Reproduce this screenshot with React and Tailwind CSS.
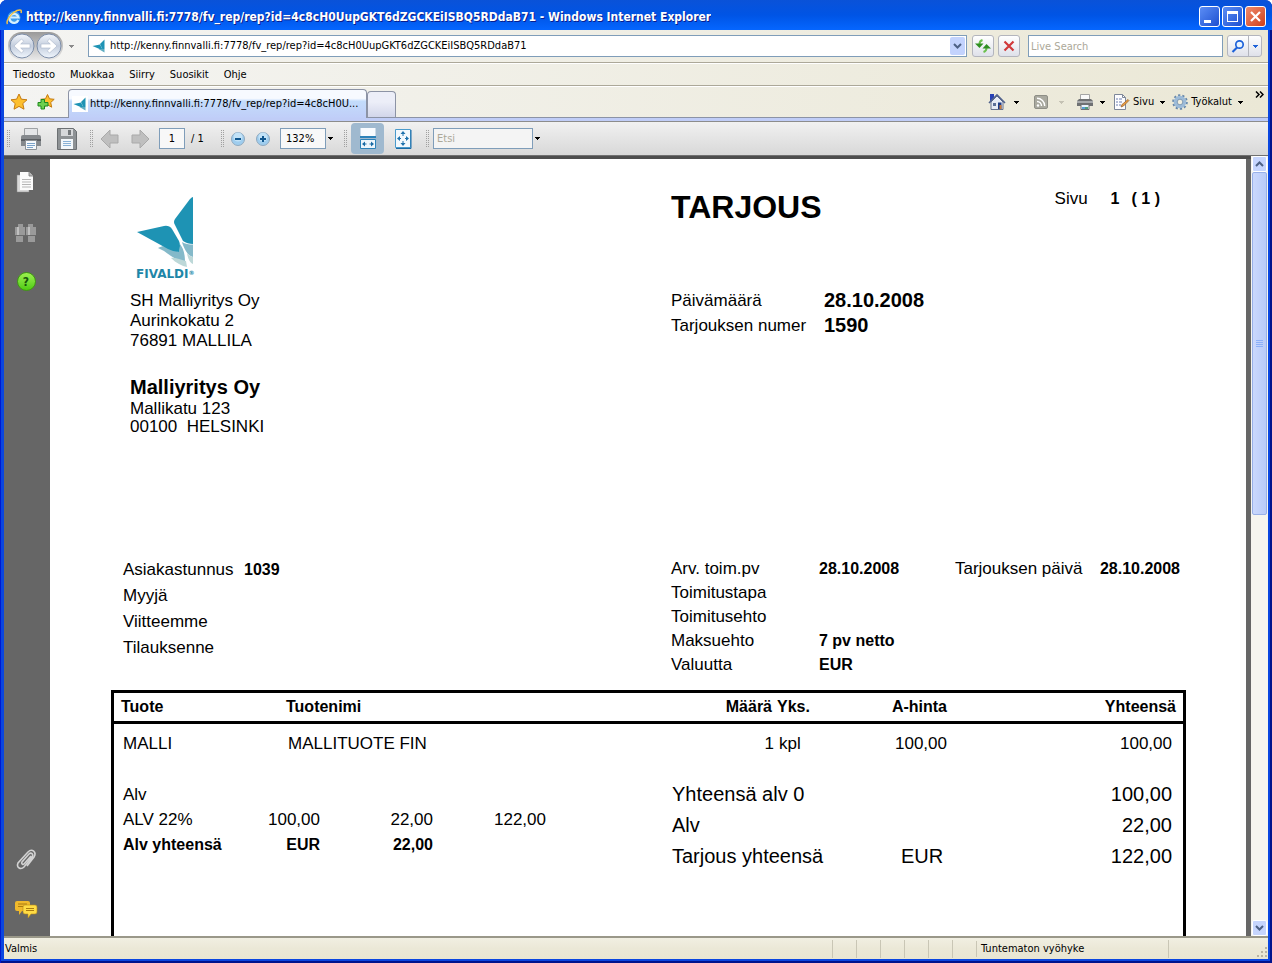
import { useState } from 'react'

const DownArrow = ({ className = 'fill-black', label = 'Avaa valikko' }) => (
  <button type="button" aria-label={label} className="flex h-5 w-[9px] items-center justify-center">
    <svg viewBox="0 0 5 3" className={`h-[3px] w-[5px] ${className}`} shapeRendering="crispEdges">
      <path d="M0 0h5v1H4v1H3v1H2V2H1V1H0z" />
    </svg>
  </button>
)

const Chevron = ({ up = false }) => (
  <svg viewBox="0 0 9 6" className={`h-[6px] w-[9px] ${up ? 'rotate-180' : ''}`}>
    <path d="M1 1l3.5 3.5L8 1" fill="none" stroke="#4d6185" strokeWidth="2" />
  </svg>
)

const Grip = () => (
  <svg viewBox="0 0 4 18" className="h-[18px] w-1 shrink-0" shapeRendering="crispEdges">
    {[0, 2, 4, 6, 8, 10, 12, 14, 16].map((y) => (
      <path key={y} d={`M0 ${y}h1v1h-1zM2 ${y}h1v1h-1z`} fill="#a0a0a0" />
    ))}
  </svg>
)

const IeLogo = () => (
  <svg viewBox="0 0 16 16" className="h-4 w-4 shrink-0">
    <circle cx="8" cy="8.500" r="6.500" fill="#3f9be8" />
    <path d="M12.300 11A4.500 4.500 0 1 1 12.500 8.500H5" fill="none" stroke="#d5efff" strokeWidth="2.200" />
    <path d="M1.500 15C-.5 12 5 4 11 1.500c3.500-1.300 5-.3 4 2.500" fill="none" stroke="#f6c445" strokeWidth="1.500" />
  </svg>
)

const BirdIcon = () => (
  <svg viewBox="0 0 16 16" className="h-4 w-4 shrink-0">
    <path d="M0 0h16v16H0z" fill="#fff" />
    <path d="M1.500 8l7.500-1.500 3 6z" fill="#1e93b4" />
    <path d="M13.500 1.500v9.500l-2 .5L9 6z" fill="#1e93b4" />
    <path d="M13.500 11v3.500l-6-3.500z" fill="#5fadc2" />
  </svg>
)

const NavButtons = () => (
  <div className="flex h-[28px] w-[55px] items-center justify-between rounded-full bg-linear-to-b from-[#9a9a9a] to-[#e9e9e9] px-px">
    {['Takaisin', 'Eteenpäin'].map((label, i) => (
      <button key={label} type="button" aria-label={label}>
        <svg viewBox="0 0 26 26" className="h-[26px] w-[26px]">
          <defs>
            <linearGradient id={`nav${i}`} x1="0" y1="0" x2="0" y2="1">
              <stop offset="0" stopColor="#f4f7fc" />
              <stop offset=".5" stopColor="#c3cddd" />
              <stop offset="1" stopColor="#f0f6fd" />
            </linearGradient>
          </defs>
          <circle cx="13" cy="13" r="12" fill={`url(#nav${i})`} stroke="#7d8ea8" />
          <path
            d="M5 13l7.500-7 2.200 2.200L11.700 11H21v4h-9.300l3 2.800L12.500 20z"
            transform={i ? 'rotate(180 13 13)' : undefined}
            fill="#fff"
            stroke="#aab6c9"
            strokeWidth=".6"
          />
        </svg>
      </button>
    ))}
  </div>
)

const StarIcon = ({ plus = false }) => (
  <svg viewBox="0 0 18 18" className="h-[18px] w-[18px]">
    <path
      d={plus ? 'M10.500 1.500l2 4.300 4.700.5-3.500 3.200 1 4.700-4.200-2.400-4.200 2.400 1-4.700L3.800 6.300l4.700-.5z' : 'M9 1l2.400 5.200 5.600.6-4.200 3.800 1.200 5.600L9 13.400l-5 2.800 1.200-5.600L1 6.800l5.600-.6z'}
      fill="#fdbf2d"
      stroke="#c57a10"
    />
    {plus && <path d="M4 6.500h3.500v3H11V13H7.500v3H4v-3H1V9.500h3z" fill="#6ed04f" stroke="#1f8a1f" />}
  </svg>
)

const HomeIcon = () => (
  <svg viewBox="0 0 18 18" className="h-[18px] w-[18px]">
    <path d="M3 9l6-6 6 6v7.500H3z" fill="#e8ecf5" stroke="#66718c" />
    <path d="M2 1h4v4L2 8.500z" fill="#2740b5" />
    <path d="M1 10l8-8 8 8" fill="none" stroke="#52638d" strokeWidth="1.600" />
    <path d="M10 9.500h3.500V16H10z" fill="#1f3d88" />
    <path d="M5 10h3v3H5z" fill="#5d6f97" />
    <path d="M11.500 12h2v4h-2z" fill="#ca7b39" />
  </svg>
)

const RssIcon = () => (
  <svg viewBox="0 0 14 14" className="h-[14px] w-[14px]">
    <rect x=".5" y=".5" width="13" height="13" rx="1.500" fill="#a9a99f" stroke="#8e8e86" />
    <circle cx="4" cy="10.500" r="1.200" fill="#fff" />
    <path d="M3 6.500a4.500 4.500 0 0 1 4.500 4.500M3 3.300A7.700 7.700 0 0 1 10.700 11" fill="none" stroke="#fff" strokeWidth="1.400" />
  </svg>
)

const SmallPrinter = () => (
  <svg viewBox="0 0 18 16" className="h-4 w-[18px]">
    <path d="M4.500.500h9v6h-9z" fill="#fafafa" stroke="#a5a5a5" />
    <path d="M3 5h12l2 2v5H1V7z" fill="#6f7173" />
    <path d="M1 7h16v2H1z" fill="#a9abad" />
    <path d="M5 10.500h8v5H5z" fill="#eaf3fb" stroke="#6f7173" />
    <path d="M6 13h3v2H6z" fill="#59a0d8" />
    <path d="M9 13h3v2H9z" fill="#4f9f7c" />
  </svg>
)

const PageIcon = () => (
  <svg viewBox="0 0 17 16" className="h-4 w-[17px]">
    <path d="M1.500.5h8l3 3v12h-11z" fill="#fdfdff" stroke="#7d8799" />
    <path d="M9.500.5v3h3" fill="none" stroke="#7d8799" />
    <path d="M3 5h2M6 5h3M3 8h2M6 8h3M3 11h2M6 11h2" stroke="#6c7fb0" />
    <path d="M8 13l1-2.500 6-5 1 1-5.500 5.500z" fill="#f0a040" stroke="#8e5a2a" strokeWidth=".7" />
  </svg>
)

const GearIcon = () => (
  <svg viewBox="0 0 16 16" className="h-4 w-4">
    <circle cx="8" cy="8" r="6.800" fill="none" stroke="#6788ab" strokeWidth="2" strokeDasharray="2.200 2.072" />
    <circle cx="8" cy="8" r="4.500" fill="#f1eedf" stroke="#9dbbd8" strokeWidth="3.500" />
    <circle cx="8" cy="8" r="2.800" fill="#f1eedf" stroke="#6788ab" strokeWidth=".8" />
  </svg>
)

const BigPrinter = () => (
  <svg viewBox="0 0 24 24" className="h-6 w-6">
    <path d="M5.500 1.500h13v9h-13z" fill="#e4e6e8" stroke="#9fa2a5" />
    <path d="M2 10q0-2 2-2h16q2 0 2 2v9H2z" fill="#85898d" />
    <path d="M2 12h20v2H2z" fill="#5b5f63" />
    <path d="M6.500 13.500h11v9h-11z" fill="#f6f9fc" stroke="#8d9296" />
    <path d="M8 16.500h8M8 18.500h8M8 20.500h6" stroke="#7ba3c9" />
  </svg>
)

const SaveIcon = () => (
  <svg viewBox="0 0 24 24" className="h-6 w-6">
    <path d="M2.500 1.500h16l3 3v18h-19z" fill="#8e9295" stroke="#6c7073" />
    <path d="M6 2h12v7H6z" fill="#d6d8da" />
    <path d="M13 3h3v5h-3z" fill="#74787b" />
    <path d="M6 12h12v10H6z" fill="#f4f8fb" />
    <path d="M8 14.500h8M8 16.500h8M8 18.500h8" stroke="#8ab2d6" />
  </svg>
)

const PageArrow = ({ back = false }) => (
  <svg viewBox="0 0 19 20" className={`h-5 w-[19px] ${back ? '' : 'rotate-180'}`}>
    <path d="M1 10l9-9v5h8v8h-8v5z" fill="#bfbfbf" stroke="#a9a9a9" />
  </svg>
)

const ZoomBall = ({ plus = false }) => (
  <svg viewBox="0 0 16 16" className="h-4 w-4">
    <circle cx="8" cy="8" r="6.500" fill="#9fcdee" stroke="#8fa9bf" />
    <circle cx="8" cy="6" r="4.500" fill="#c2e2f7" />
    <path d={plus ? 'M7 5h2v2h2v2H9v2H7V9H5V7h2z' : 'M5 7h6v2H5z'} fill="#11578f" />
  </svg>
)

const FitWidthIcon = () => (
  <svg viewBox="0 0 16 21" className="h-[21px] w-4">
    <path d="M.5 0h15v9.500H.5z" fill="#f8fbfe" />
    <path d="M0 8h16v2H0z" fill="#2d82b9" />
    <path d="M.5 11.500h15v9H.5z" fill="#eef6fc" stroke="#2d82b9" />
    <path d="M2 16l3-2.500v2h1.500v1H5v2zM14 16l-3-2.500v2H9.500v1H11v2z" fill="#1a6ba5" />
  </svg>
)

const FitPageIcon = () => (
  <svg viewBox="0 0 17 20" className="h-5 w-[17px]">
    <path d="M.5.500h15v18H.5z" fill="#f3f9fd" stroke="#4a9acb" />
    <path d="M16 1v18.500H1" fill="none" stroke="#1a6ba5" />
    <path d="M8 2l2.500 3h-5zM8 17l2.500-3h-5zM2 9.500L5 7v5zM14 9.500L11 7v5z" fill="#1f73ad" />
    <path d="M8 5v2M8 12v2M4 9.500h2M10 9.500h2" stroke="#1f73ad" />
  </svg>
)

const FivaldiLogo = () => (
  <div className="h-[84px]">
    <svg viewBox="0 0 64 72" className="h-[72px] w-16" role="img" aria-label="Fivaldi">
      <path d="M46 46c3 2 7 2.500 11 2.500V61c-5-1-9-8-11-15z" fill="#84b9c9" />
      <path d="M22 52c4-2 6-2 9-1l12 5 1-8c3 4 5 9 5 18-8-1-17-8-21-11-2-1-4-2-6-3z" fill="#84b9c9" />
      <path d="M51 57c2 2 4 4 6 4v7c-3-1-5-5-6-11z" fill="#bdd8d8" />
      <path d="M35 62c5-1 9 2 15 3l1 6c-5-1-11-4-16-9z" fill="#bdd8d8" />
      <path d="M57 1v47c-4 0-7-1-10-3l-8-16q-2-3 0-6L54 3q2-2 3-2z" fill="#1e93b4" />
      <path d="M1 36l27-6q5-1 8 3l7 12q1 2 1 5l-1 6q-5 0-11-3z" fill="#1e93b4" />
    </svg>
    <p className="font-['DejaVu_Sans',sans-serif] text-[12px] leading-3 font-bold text-[#1e86a8]">
      FIVALDI<sup className="text-[6px]">®</sup>
    </p>
  </div>
)

const PagesIcon = () => (
  <svg viewBox="0 0 20 24" className="h-6 w-5">
    <path d="M1 4h12v17H1z" fill="#d8d8d8" stroke="#888" strokeWidth=".5" />
    <path d="M4 1h9l4 4v14H4z" fill="#fbfbfb" />
    <path d="M13 1v4h4" fill="#bbb" stroke="#777" strokeWidth=".8" />
    <path d="M6 8.500h9M6 11h9M6 13.500h9M6 16h9" stroke="#b5b5b5" />
  </svg>
)

const BinocularsIcon = () => (
  <svg viewBox="0 0 22 20" className="h-5 w-[22px]">
    <path d="M3 1h5v3h2v9H8v6H1v-6H0V4h3zM13 1h5v3h3v9h-1v6h-7v-6h-2V4h2z" fill="#9a9a9a" />
    <path d="M0 12.500h10M11 12.500h10" stroke="#6b6b6b" />
    <path d="M3 4v8M14 4v8" stroke="#c0c0c0" strokeWidth="2" />
  </svg>
)

const ClipIcon = () => (
  <svg viewBox="0 0 22 24" className="h-6 w-[22px]">
    <path
      d="M16 8l-7 8c-1 1-3 0-2-2l7-8c2-2 5 0 3 3l-8 10c-3 3-8 1-6-4L13 4c4-4 9 0 6 5l-7 9"
      fill="none"
      stroke="#d2d2d2"
      strokeWidth="1.600"
    />
  </svg>
)

const CommentsIcon = () => (
  <svg viewBox="0 0 24 19" className="h-[19px] w-6">
    <path d="M3 1h11q2 0 2 2v6q0 2-2 2H8l-3 4v-4H3q-2 0-2-2V3q0-2 2-2z" fill="#f0b92c" />
    <path d="M4 4h9M4 6.500h9" stroke="#a97a10" />
    <path d="M11 5h10q2 0 2 2v5q0 2-2 2h-4l-3 4v-4h-3q-2 0-2-2V7q0-2 2-2z" fill="#ffdc45" stroke="#b98c1a" strokeWidth=".6" />
    <path d="M12 8.500h8M12 10.500h8" stroke="#a97a10" />
  </svg>
)

const captionButtons = [
  { label: 'Pienennä', bg: 'bg-linear-to-br from-[#5b8df5] to-[#1f4fd0]', icon: <path d="M4 13h7v3H4z" fill="#fff" /> },
  { label: 'Suurenna', bg: 'bg-linear-to-br from-[#5b8df5] to-[#1f4fd0]', icon: <path d="M4 4h11v11H4zm1 3v7h9V7z" fill="#fff" fillRule="evenodd" /> },
  { label: 'Sulje', bg: 'bg-linear-to-br from-[#ef8a6b] to-[#cf3d14]', icon: <path d="M5 5l9 9M14 5l-9 9" stroke="#fff" strokeWidth="2.200" /> },
]

const TitleBar = () => (
  <header className="-mx-1 flex h-[30px] shrink-0 items-center bg-linear-to-b from-[#0a52d8] via-[#0054e5] to-[#0566ff] px-1 pt-[3px]">
    <div className="flex min-w-0 flex-1 items-center gap-[4px] pl-[2px]">
      <IeLogo />
      <h1 className="truncate text-[12px] font-bold text-white [text-shadow:1px_1px_#0a1d8c]">
        http://kenny.finnvalli.fi:7778/fv_rep/rep?id=4c8cH0UupGKT6dZGCKEiISBQ5RDdaB71 - Windows Internet Explorer
      </h1>
    </div>
    <div className="flex gap-[2px] pr-[2px]">
      {captionButtons.map((b) => (
        <button key={b.label} type="button" aria-label={b.label} className={`h-[21px] w-[21px] rounded-[3px] border border-white ${b.bg}`}>
          <svg viewBox="0 0 19 19" className="h-[19px] w-[19px]">{b.icon}</svg>
        </button>
      ))}
    </div>
  </header>
)

const AddressBar = ({ url, onUrlChange }) => (
  <div className="flex h-[33px] shrink-0 items-center border-b border-[#aca899] pr-[6px] pl-1">
    <NavButtons />
    <div className="mr-2 flex w-[17px] justify-center">
      <DownArrow className="fill-[#8a8a8a]" label="Viimeisimmät sivut" />
    </div>
    <div className="flex h-[22px] min-w-0 flex-1 items-center border border-[#7f9db9] bg-white pr-px pl-[2px]">
      <BirdIcon />
      <input
        aria-label="Osoite"
        value={url}
        onChange={(e) => onUrlChange(e.target.value)}
        className="ml-[3px] min-w-0 flex-1 bg-transparent outline-none"
      />
      <button type="button" aria-label="Näytä osoitteet" className="flex h-[18px] w-[15px] items-center justify-center rounded-[2px] bg-[#c3d3fd]">
        <Chevron />
      </button>
    </div>
    <button type="button" aria-label="Päivitä" className="ml-[5px] flex h-[22px] w-[22px] items-center justify-center rounded-[3px] border border-[#b3b5bd] bg-linear-to-b from-white to-[#dfe1ea]">
      <svg viewBox="0 0 16 16" className="h-4 w-4">
        <path d="M4.500 6Q4.500 3 7.500 2" fill="none" stroke="#6cc04f" strokeWidth="2" />
        <path d="M0 5.500h8.500L4.500 10z" fill="#2f8f23" />
        <path d="M11.500 10q0 3-3 4" fill="none" stroke="#6cc04f" strokeWidth="2" />
        <path d="M7.500 10.500H16L11.500 6z" fill="#2f8f23" />
      </svg>
    </button>
    <button type="button" aria-label="Pysäytä" className="ml-1 flex h-[22px] w-[22px] items-center justify-center rounded-[3px] border border-[#b3b5bd] bg-linear-to-b from-white to-[#dfe1ea]">
      <svg viewBox="0 0 12 12" className="h-3 w-3">
        <path d="M1.500 1.500l9 9M10.500 1.500l-9 9" stroke="#d0393b" strokeWidth="2.200" />
      </svg>
    </button>
    <input
      aria-label="Haku"
      placeholder="Live Search"
      className="ml-2 h-[22px] w-[195px] border border-[#7f9db9] bg-white px-[2px] outline-none placeholder:text-[#aca899]"
    />
    <div className="ml-1 flex h-[22px] rounded-[3px] border border-[#b3b5bd] bg-linear-to-b from-white to-[#dfe1ea]">
      <button type="button" aria-label="Etsi" className="flex w-[21px] items-center justify-center border-r border-[#b3b5bd]">
        <svg viewBox="0 0 14 14" className="h-[14px] w-[14px]">
          <circle cx="8.500" cy="5.500" r="3.700" fill="#e8f3ff" stroke="#1e62d9" strokeWidth="1.700" />
          <path d="M6 8.500L1.500 13" stroke="#1e62d9" strokeWidth="2.200" />
        </svg>
      </button>
      <div className="flex w-3 items-center justify-center">
        <DownArrow className="fill-[#1e62d9]" label="Hakuasetukset" />
      </div>
    </div>
  </div>
)

const MenuBar = () => (
  <nav className="flex h-[23px] shrink-0 items-center gap-[15px] border-t border-b border-t-white border-b-[#aca899] pl-[9px]">
    {['Tiedosto', 'Muokkaa', 'Siirry', 'Suosikit', 'Ohje'].map((item) => (
      <button key={item} type="button">{item}</button>
    ))}
  </nav>
)

const TabBar = () => (
  <div className="flex h-9 shrink-0 flex-col border-t border-white">
    <div className="flex h-[31px] shrink-0 border-b border-[#8c93a5]">
      <div className="flex w-16 items-center gap-[9px] pl-[6px]">
        <button type="button" aria-label="Suosikit"><StarIcon /></button>
        <button type="button" aria-label="Lisää suosikkeihin"><StarIcon plus /></button>
      </div>
      <button
        type="button"
        className="mt-[2px] -mb-px flex w-[299px] items-center gap-[2px] rounded-t-[4px] border border-b-0 border-[#8c93a5] bg-linear-to-b from-[#f7faff] from-30% via-[#c3dcfb] via-40% to-[#c0cef8] pl-[3px]"
      >
        <BirdIcon />
        <span className="truncate">http://kenny.finnvalli.fi:7778/fv_rep/rep?id=4c8cH0U...</span>
      </button>
      <button type="button" aria-label="Uusi välilehti" className="mt-1 w-[29px] rounded-t-[4px] border border-b-0 border-[#8c93a5] bg-linear-to-b from-[#eceef8] from-40% to-[#d2d6ea]" />
      <div className="ml-auto flex items-center">
        <button type="button" aria-label="Aloitussivu" className="mr-[6px]"><HomeIcon /></button>
        <DownArrow />
        <button type="button" aria-label="Syötteet" className="ml-[13px]"><RssIcon /></button>
        <div className="ml-[9px]"><DownArrow className="fill-[#c5c2b4]" /></div>
        <button type="button" aria-label="Tulosta" className="mr-1 ml-[10px]"><SmallPrinter /></button>
        <DownArrow />
        <button type="button" className="mr-1 ml-[6px] flex items-center gap-[3px]"><PageIcon />Sivu</button>
        <DownArrow />
        <button type="button" className="mr-1 ml-[5px] flex items-center gap-[3px]"><GearIcon />Työkalut</button>
        <DownArrow />
        <button type="button" aria-label="Lisää" className="mr-1 mb-4 ml-[10px]">
          <svg viewBox="0 0 9 7" className="h-[7px] w-[9px]">
            <path d="M1 .5l3 3-3 3M5 .5l3 3-3 3" fill="none" stroke="#000" strokeWidth="1.500" />
          </svg>
        </button>
      </div>
    </div>
    <div className="flex-1 border-b border-[#8c8c8c] bg-[#c0cdf7]" />
  </div>
)

const PdfToolbar = () => (
  <div className="flex h-[34px] shrink-0 items-center border-b border-[#707070] bg-linear-to-b from-[#f1f1f1] to-[#d8d8d8] pl-[3px]">
    <Grip />
    <button type="button" aria-label="Tulosta" className="ml-2"><BigPrinter /></button>
    <button type="button" aria-label="Tallenna" className="mr-[11px] ml-3"><SaveIcon /></button>
    <Grip />
    <button type="button" aria-label="Edellinen sivu" className="ml-[6px]"><PageArrow back /></button>
    <button type="button" aria-label="Seuraava sivu" className="ml-3"><PageArrow /></button>
    <input aria-label="Sivunumero" defaultValue="1" className="ml-[9px] h-[21px] w-[26px] border border-[#7f9db9] bg-[#f8f8f8] text-center" />
    <span className="w-9 pl-[6px]">/ 1</span>
    <Grip />
    <button type="button" aria-label="Loitonna" className="ml-[5px]"><ZoomBall /></button>
    <button type="button" aria-label="Lähennä" className="ml-[9px]"><ZoomBall plus /></button>
    <input aria-label="Zoomaus" defaultValue="132%" className="ml-[9px] h-[21px] w-[46px] border border-[#7f9db9] bg-[#f8f8f8] px-[5px]" />
    <div className="mr-[9px]"><DownArrow /></div>
    <Grip />
    <button type="button" aria-label="Sovita leveys" className="ml-[3px] flex h-[31px] w-[33px] items-center justify-center rounded-[4px] bg-[#9fb9cf]">
      <FitWidthIcon />
    </button>
    <button type="button" aria-label="Sovita sivu" className="mr-[14px] ml-[11px]"><FitPageIcon /></button>
    <Grip />
    <input aria-label="Etsi asiakirjasta" placeholder="Etsi" className="ml-[3px] h-[21px] w-[100px] border border-[#7f9db9] bg-[#f4f4f4] px-[3px] placeholder:text-[#aca899]" />
    <DownArrow />
  </div>
)

const SideStrip = () => (
  <aside className="flex w-[46px] shrink-0 flex-col items-center bg-[#666] pt-3 pr-[2px] pb-[17px]">
    <button type="button" aria-label="Sivut"><PagesIcon /></button>
    <button type="button" aria-label="Etsi" className="mt-7"><BinocularsIcon /></button>
    <button type="button" aria-label="Ohje" className="mt-[29px] flex h-[19px] w-[19px] items-center justify-center rounded-full border border-[#3f9b10] bg-linear-to-b from-[#9bf04e] to-[#4ccb0c] text-[12px] font-bold text-[#17540a]">?</button>
    <button type="button" aria-label="Liitteet" className="mt-auto"><ClipIcon /></button>
    <button type="button" aria-label="Kommentit" className="mt-7"><CommentsIcon /></button>
  </aside>
)

const customerRows = [['Asiakastunnus', '1039'], ['Myyjä'], ['Viitteemme'], ['Tilauksenne']]

const deliveryRows = [
  ['Arv. toim.pv', '28.10.2008'],
  ['Toimitustapa'],
  ['Toimitusehto'],
  ['Maksuehto', '7 pv netto'],
  ['Valuutta', 'EUR'],
]

const OfferHeader = () => (
  <section className="grid grid-cols-[560px_1fr]">
    <div className="pt-[37px] pl-[19px]">
      <div className="pl-[6px]"><FivaldiLogo /></div>
      <p className="mt-[11px] leading-5">
        SH Malliyritys Oy<br />Aurinkokatu 2<br />76891 MALLILA
      </p>
      <p className="mt-[23px] text-[20px] leading-[26px] font-bold">Malliyritys Oy</p>
      <p className="leading-[18px] whitespace-pre">{'Mallikatu 123\n00100  HELSINKI'}</p>
    </div>
    <div className="pt-[30px]">
      <div className="flex items-start justify-between pr-[26px]">
        <h2 className="text-[32px] leading-9 font-bold">TARJOUS</h2>
        <p className="flex leading-5">
          <span className="w-14">Sivu</span>
          <b className="w-[21px] text-[16px]">1</b>
          <b className="text-[16px]">( 1 )</b>
        </p>
      </div>
      <dl className="mt-[63px] grid grid-cols-[153px_1fr] leading-[25px]">
        <dt>Päivämäärä</dt>
        <dd className="text-[20px] font-bold">28.10.2008</dd>
        <dt>Tarjouksen numer</dt>
        <dd className="text-[20px] font-bold">1590</dd>
      </dl>
    </div>
  </section>
)

const OfferDetails = () => (
  <section className="mt-[121px] grid grid-cols-[560px_1fr]">
    <dl className="pl-3">
      {customerRows.map(([label, value]) => (
        <div key={label} className="flex leading-[26px]">
          <dt className="w-[121px]">{label}</dt>
          <dd className="text-[16px] font-bold">{value}</dd>
        </div>
      ))}
    </dl>
    <div className="flex justify-between pr-[6px]">
      <dl>
        {deliveryRows.map(([label, value]) => (
          <div key={label} className="flex leading-6">
            <dt className="w-[148px]">{label}</dt>
            <dd className="text-[16px] font-bold">{value}</dd>
          </div>
        ))}
      </dl>
      <dl className="flex leading-6">
        <dt className="w-[145px]">Tarjouksen päivä</dt>
        <dd className="text-[16px] font-bold">28.10.2008</dd>
      </dl>
    </div>
  </section>
)

const totals = [
  ['Yhteensä alv 0', '', '100,00'],
  ['Alv', '', '22,00'],
  ['Tarjous yhteensä', 'EUR', '122,00'],
]

const OfferLines = () => (
  <section className="mt-[13px] flex-1 border-[3px] border-b-0 border-black">
    <table className="w-full table-fixed">
      <colgroup>
        <col className="w-[165px]" />
        <col />
        <col className="w-[120px]" />
        <col className="w-14" />
        <col className="w-[117px]" />
        <col className="w-[236px]" />
      </colgroup>
      <thead>
        <tr className="h-[29px] border-b-[3px] border-black text-left text-[16px]">
          <th className="pl-[7px]">Tuote</th>
          <th className="pl-[7px]">Tuotenimi</th>
          <th className="pr-[2px] text-right">Määrä</th>
          <th className="pl-[3px]">Yks.</th>
          <th className="text-right">A-hinta</th>
          <th className="pr-[7px] text-right">Yhteensä</th>
        </tr>
      </thead>
      <tbody>
        <tr className="h-[42px]">
          <td className="pl-[9px]">MALLI</td>
          <td className="pl-[9px]">MALLITUOTE FIN</td>
          <td className="text-right">1</td>
          <td className="pl-[5px]">kpl</td>
          <td className="text-right">100,00</td>
          <td className="pr-[11px] text-right">100,00</td>
        </tr>
      </tbody>
    </table>
    <div className="flex items-start pt-[15px]">
      <div className="w-[558px] pl-[9px]">
        <table className="mt-[3px] table-fixed leading-[25px]">
          <colgroup>
            <col className="w-[109px]" />
            <col className="w-[88px]" />
            <col className="w-[113px]" />
            <col className="w-[113px]" />
          </colgroup>
          <tbody>
            <tr><td>Alv</td></tr>
            <tr className="text-right">
              <td className="text-left">ALV 22%</td>
              <td>100,00</td>
              <td>22,00</td>
              <td>122,00</td>
            </tr>
            <tr className="text-right text-[16px] font-bold">
              <td className="text-left">Alv yhteensä</td>
              <td>EUR</td>
              <td>22,00</td>
            </tr>
          </tbody>
        </table>
      </div>
      <div className="flex-1 pr-[11px]">
        <table className="w-full table-fixed text-[20px] leading-[31px]">
          <colgroup>
            <col className="w-[229px]" />
            <col className="w-[100px]" />
            <col />
          </colgroup>
          <tbody>
            {totals.map(([label, currency, sum]) => (
              <tr key={label}>
                <td>{label}</td>
                <td>{currency}</td>
                <td className="text-right">{sum}</td>
              </tr>
            ))}
          </tbody>
        </table>
      </div>
    </div>
  </section>
)

const ScrollBar = () => (
  <div className="flex w-[17px] shrink-0 flex-col bg-[#f6f5ef] px-px">
    <button type="button" aria-label="Vieritä ylös" className="flex h-4 shrink-0 items-center justify-center rounded-[2px] border border-white bg-[#c6d5fd]">
      <Chevron up />
    </button>
    <div className="flex h-[44%] flex-col items-center justify-center gap-px rounded-[2px] border border-[#98b0e8] bg-linear-to-r from-[#cad8fd] to-[#b9cbf8]">
      {[0, 1, 2, 3].map((i) => (
        <div key={i} className="h-px w-[7px] border-b border-[#8cb0f8]" />
      ))}
    </div>
    <button type="button" aria-label="Vieritä alas" className="mt-auto flex h-4 shrink-0 items-center justify-center rounded-[2px] border border-white bg-[#c6d5fd]">
      <Chevron />
    </button>
  </div>
)

const StatusBar = () => (
  <footer className="flex h-[23px] shrink-0 items-center border-t-2 border-[#9a9889] bg-linear-to-b from-[#f1efe2] via-[#ebe8d7] to-[#e9e6d2] pl-px">
    <span className="flex-1">Valmis</span>
    {[0, 1, 2, 3, 4, 5].map((i) => (
      <span key={i} className="h-[18px] w-6 border-l border-[#c9c6b5]" />
    ))}
    <span className="w-48 border-l border-[#c9c6b5] pl-1">Tuntematon vyöhyke</span>
    <span className="flex h-[18px] w-[100px] items-end justify-end border-l border-[#c9c6b5]">
      <svg viewBox="0 0 12 12" className="h-3 w-3" shapeRendering="crispEdges">
        <path d="M9 1h2v2H9zM5 5h2v2H5zM9 5h2v2H9zM1 9h2v2H1zM5 9h2v2H5zM9 9h2v2H9z" fill="#b8b4a2" />
      </svg>
    </span>
  </footer>
)

export default function App() {
  const [url, setUrl] = useState('http://kenny.finnvalli.fi:7778/fv_rep/rep?id=4c8cH0UupGKT6dZGCKEiISBQ5RDdaB71')

  return (
    <div className="flex h-screen flex-col overflow-hidden rounded-t-[7px] bg-[#0a46e0] px-1 pb-1 font-['DejaVu_Sans_Condensed','DejaVu_Sans',sans-serif] text-[11px] leading-4 text-black shadow-[inset_1px_0_#0019cf,inset_-2px_-2px_#00138c]">
      <TitleBar />
      <div className="flex shrink-0 flex-col bg-linear-to-r from-[#f4f4f2] to-[#ebe8d6]">
        <AddressBar url={url} onUrlChange={setUrl} />
        <MenuBar />
        <TabBar />
      </div>
      <PdfToolbar />
      <div className="flex min-h-0 flex-1">
        <div className="flex min-w-0 flex-1 flex-col border-t-[3px] border-[#4d4d4d] bg-[#666]">
          <div className="flex min-h-0 flex-1">
            <SideStrip />
            <main className="mr-[5px] flex min-w-0 flex-1 flex-col overflow-hidden bg-white pr-[60px] pl-[61px] font-['Liberation_Sans',Arial,sans-serif] text-[17px]">
              <OfferHeader />
              <OfferDetails />
              <OfferLines />
            </main>
          </div>
        </div>
        <ScrollBar />
      </div>
      <StatusBar />
    </div>
  )
}
